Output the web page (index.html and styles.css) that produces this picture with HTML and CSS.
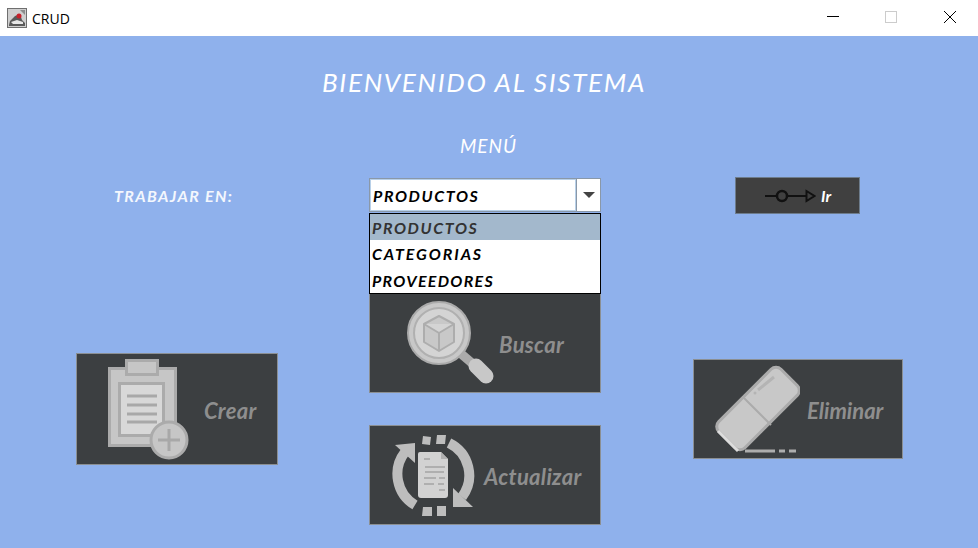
FILE: index.html
```html
<!DOCTYPE html>
<html lang="es">
<head>
    <meta charset="UTF-8">
    <title>CRUD</title>
    <link rel="stylesheet" href="styles.css">
</head>
<body>
    <div class="titlebar">
        <svg class="app_icon" width="20" height="20" viewBox="0 0 20 20">
            <rect x="0.5" y="0.5" width="19" height="19" fill="#cfcfcf" stroke="#6f6f6f"/>
            <path d="M2 17 L3 13 L8 8 L13 6 L15 12 L18 15 L18 18 L2 18 Z" fill="#5a5a5a"/>
            <path d="M4 14 L10 12 L16 14 L16 16 L6 16 Z" fill="#e8e8e8"/>
            <path d="M13 2 L18 2 L18 7 Z" fill="#8c8c8c"/>
            <circle cx="12" cy="8" r="2.500" fill="#c8202a"/>
        </svg>
        <span class="app_name">CRUD</span>
        <div class="win_controls">
            <svg class="win_btn" width="12" height="12" viewBox="0 0 12 12"><path d="M0 5.5 H12" stroke="#000"/></svg>
            <svg class="win_btn" width="12" height="12" viewBox="0 0 12 12"><rect x="0.5" y="0.5" width="11" height="11" fill="none" stroke="#ccc"/></svg>
            <svg class="win_btn" width="12" height="12" viewBox="0 0 12 12"><path d="M0 0 L12 12 M12 0 L0 12" stroke="#000"/></svg>
        </div>
    </div>

    <div class="main">
        <h1 class="welcome">BIENVENIDO AL SISTEMA</h1>
        <h2 class="menu_title">MENÚ</h2>

        <div class="columns work_row">
            <div class="work_label">TRABAJAR EN:</div>
            <div class="combo">
                <div class="combo_value">PRODUCTOS</div>
                <div class="combo_arrow"><span class="arrow_down"></span></div>
                <ul class="combo_list">
                    <li class="selected">PRODUCTOS</li>
                    <li class="wide">CATEGORIAS</li>
                    <li>PROVEEDORES</li>
                </ul>
            </div>
            <button class="btn go_btn">
                <svg width="52" height="14" viewBox="764 188 52 14">
                    <path d="M765 195 H806" stroke="#111" stroke-width="2" fill="none"/>
                    <circle cx="782" cy="195" r="5" fill="#404040" stroke="#111" stroke-width="2.500"/>
                    <path d="M806.500 190 L814.500 195 L806.500 200 Z" fill="#404040" stroke="#111" stroke-width="2"/>
                </svg>
                <span>Ir</span>
            </button>
        </div>

        <div class="columns tools">
            <button class="btn tool crear">
                <svg width="90" height="102" viewBox="100 358 90 102">
                    <rect x="109.500" y="368.500" width="66" height="77" fill="#c6c6c6" stroke="#ababab" stroke-width="3"/>
                    <rect x="126.500" y="360.500" width="31" height="14" fill="#c6c6c6" stroke="#ababab" stroke-width="3"/>
                    <rect x="119.500" y="383.500" width="44" height="52" fill="#d8d8d8" stroke="#ababab" stroke-width="3"/>
                    <path d="M127 396 H157 M127 405 H157 M127 414 H157 M127 422 H157" stroke="#a8a8a8" stroke-width="3"/>
                    <circle cx="169" cy="440" r="18" fill="#c6c6c6" stroke="#ababab" stroke-width="3"/>
                    <path d="M169 429 V451 M158 440 H180" stroke="#a8a8a8" stroke-width="3"/>
                </svg>
                <span>Crear</span>
            </button>

            <div class="middle">
                <button class="btn tool buscar">
                    <svg width="92" height="94" viewBox="403 296 92 94">
                        <path d="M459 352 L480 370" stroke="#ababab" stroke-width="9"/>
                        <path d="M476 366 L486 376" stroke="#c8c8c8" stroke-width="15" stroke-linecap="round"/>
                        <circle cx="439" cy="333" r="31" fill="#c8c8c8" stroke="#ababab" stroke-width="2"/>
                        <circle cx="439" cy="333" r="25" fill="#d4d4d4" stroke="#b0b0b0" stroke-width="2"/>
                        <path d="M439 316 L454 324 V342 L439 351 L424 342 V324 Z M424 324 L439 333 L454 324 M439 333 V351" fill="#c8c8c8" stroke="#adadad" stroke-width="2" stroke-linejoin="round"/>
                    </svg>
                    <span>Buscar</span>
                </button>
                <button class="btn tool actualizar">
                    <svg width="84" height="84" viewBox="392 433 84 84">
                        <path d="M449 443 A36 36 0 0 1 462 497" fill="none" stroke="#bdbdbd" stroke-width="10"/>
                        <path d="M453 488 L473 507 H453 Z" fill="#bdbdbd"/>
                        <path d="M415 505 A36 36 0 0 1 405 452" fill="none" stroke="#bdbdbd" stroke-width="10"/>
                        <path d="M395 445 L415 443 V463 Z" fill="#bdbdbd"/>
                        <path d="M423 436 L431 437 L430 445 L422 444 Z M437 435 L446 435 L445 444 L436 444 Z M423 507 L432 507 L432 516 L422 516 Z M437 506 L446 506 L446 516 L437 516 Z" fill="#bdbdbd"/>
                        <path d="M420 452 H441 L448 459 V495 Q448 498 445 498 H421 Q418 498 418 495 V454 Q418 452 420 452 Z" fill="#d2d2d2"/>
                        <path d="M441 452 V459 H448 Z" fill="#b0b0b0"/>
                        <path d="M424 459 H430 M425 467 H445 M425 472 H444 M424 478 H436 M439 478 H445 M424 484 H434 M438 484 H444 M439 490 H445" stroke="#a4a4a4" stroke-width="1.500"/>
                    </svg>
                    <span>Actualizar</span>
                </button>
            </div>

            <button class="btn tool eliminar">
                <svg width="90" height="94" viewBox="710 362 90 94" class="eraser">
                    <rect x="714" y="390" width="88" height="37" rx="7" transform="rotate(-45 758 408.500)" fill="#c8c8c8" stroke="#ababab" stroke-width="3"/>
                    <path d="M743 397 L771 425" stroke="#ababab" stroke-width="2"/>
                    <path d="M718 431 L738 451" stroke="#dcdcdc" stroke-width="3"/>
                    <path d="M758 390 L774 377" stroke="#b4b4b4" stroke-width="3"/>
                    <circle cx="755" cy="393" r="1.500" fill="#b4b4b4"/>
                    <path d="M745 451 H775 M779 451 H785 M789 451 H796" stroke="#adadad" stroke-width="3"/>
                </svg>
                <span>Eliminar</span>
            </button>
        </div>
    </div>
</body>
</html>
```

FILE: styles.css
```css
* {
    box-sizing: border-box;
}
html, body {
    margin: 0;
    height: 100%;
    overflow: hidden;
}
body {
    font-family: "Lato", "Open Sans", sans-serif;
    background: #8fb1ec;
}
.titlebar {
    display: flex;
    align-items: center;
    height: 36px;
    background: #fff;
    padding-left: 7px;
}
.app_name {
    font-family: "Open Sans", sans-serif;
    font-size: 14px;
    color: #000;
    margin-left: 5px;
}
.win_controls {
    display: flex;
    gap: 46px;
    margin-left: auto;
    margin-right: 22px;
    margin-top: -2px;
}
.win_btn {
    display: block;
}
.win_btn:last-child {
    margin-left: 1px;
}
.main {
    height: 512px;
    padding-top: 31px;
}
.welcome {
    margin: 0;
    height: 30px;
    line-height: 30px;
    width: 968px;
    text-align: center;
    font-size: 26px;
    font-weight: 400;
    font-style: italic;
    letter-spacing: 1.7px;
    color: #fff;
}
.menu_title {
    margin: 37px 0 0;
    height: 24px;
    line-height: 24px;
    width: 977px;
    text-align: center;
    font-size: 19px;
    font-weight: 400;
    font-style: italic;
    letter-spacing: 1px;
    color: #fff;
}
.columns {
    display: grid;
    grid-template-columns: 202px 232px 211px;
    column-gap: 91px;
    padding-left: 76px;
}
.work_row {
    margin-top: 19px;
    align-items: start;
}
.work_label {
    padding: 8px 0 0 38px;
    font-size: 16px;
    line-height: 22px;
    font-weight: 700;
    font-style: italic;
    letter-spacing: 1.35px;
    color: #f4f7fd;
}
.combo {
    position: relative;
    display: flex;
    height: 34px;
    margin-top: 1px;
    background: #fff;
    border: 1px solid #8a98a8;
}
.combo_value {
    flex: 1;
    border: 1px solid #b8d0e8;
    padding-left: 2px;
    font-size: 16px;
    line-height: 31px;
    font-weight: 700;
    font-style: italic;
    letter-spacing: 1.6px;
    color: #000;
}
.combo_arrow {
    display: flex;
    align-items: center;
    justify-content: center;
    width: 24px;
    border-left: 1px solid #8a98a8;
}
.arrow_down {
    width: 0;
    height: 0;
    border-left: 6px solid transparent;
    border-right: 6px solid transparent;
    border-top: 6px solid #444;
}
.combo_list {
    position: absolute;
    top: 34px;
    left: -1px;
    right: -1px;
    z-index: 2;
    margin: 0;
    padding: 0;
    list-style-type: none;
    background: #fff;
    border: 1px solid #000;
    height: 81px;
}
.combo_list li {
    height: 26.500px;
    padding-left: 2px;
    font-size: 16px;
    line-height: 27px;
    font-weight: 700;
    font-style: italic;
    letter-spacing: 1.3px;
    color: #000;
}
.combo_list .wide {
    letter-spacing: 1.9px;
}
.combo_list .selected {
    height: 26px;
    background: #a3b8cc;
    color: #333;
    letter-spacing: 1.6px;
}
.btn {
    display: flex;
    align-items: center;
    margin: 0;
    padding: 0;
    font-family: inherit;
    font-weight: 700;
    font-style: italic;
    background: #3c3f41;
    border: 1px solid #8b8f92;
    color: #8e8e8e;
}
.go_btn {
    width: 125px;
    height: 37px;
    margin-left: 43px;
    padding-left: 28px;
    gap: 5px;
    background: #404040;
    border-color: #6d7c8c;
    font-size: 16px;
    color: #fff;
}
.tools {
    align-items: start;
    margin-top: 79px;
}
.tool {
    font-size: 22px;
    letter-spacing: 0.3px;
}
.tool span {
    margin-top: 2px;
}
.crear {
    margin-top: 60px;
    height: 112px;
    padding-left: 23px;
    gap: 14px;
}
.middle {
    display: flex;
    flex-direction: column;
    gap: 32px;
}
.buscar {
    height: 100px;
    padding-left: 33px;
    gap: 4px;
}
.actualizar {
    height: 100px;
    padding-left: 22px;
    gap: 8px;
}
.eliminar {
    margin-top: 66px;
    margin-left: 1px;
    height: 100px;
    padding-left: 16px;
    gap: 7px;
    letter-spacing: 0;
}
```
